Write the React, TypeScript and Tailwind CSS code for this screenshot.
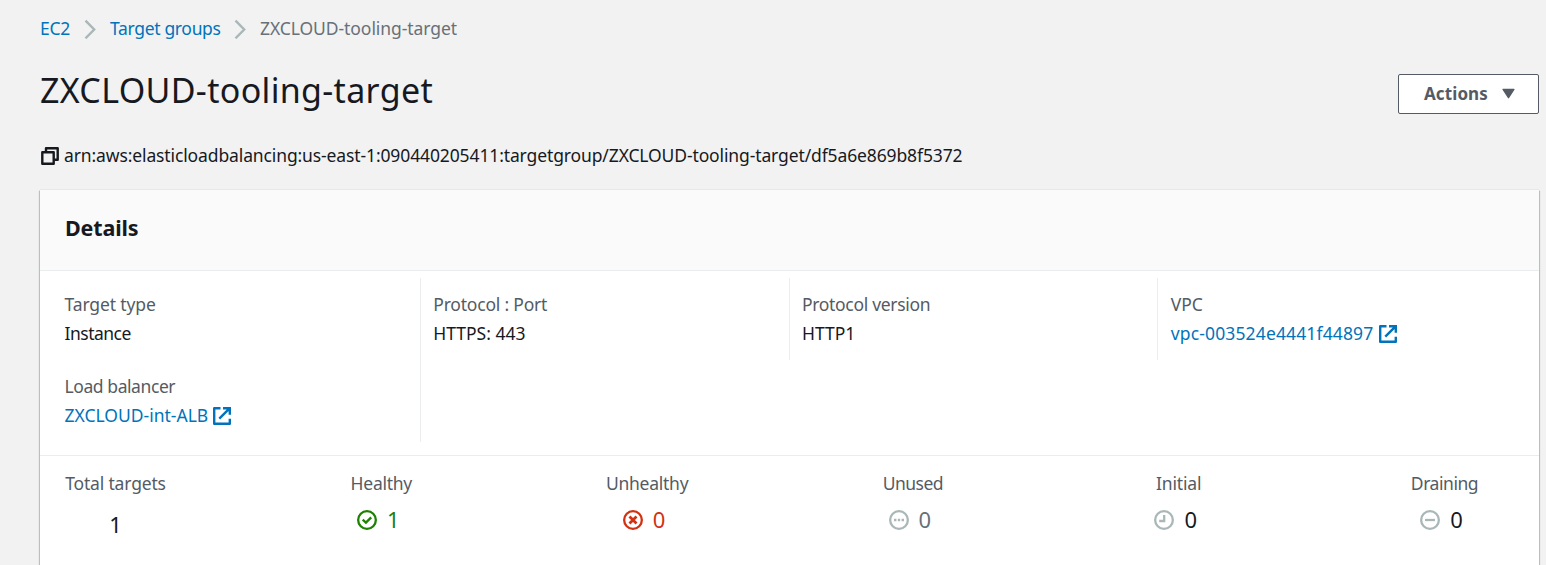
import type { ReactNode } from "react";

function Chevron() {
  return (
    <svg className="-ml-px mr-px h-5 w-3 shrink-0" viewBox="0 0 12 20" fill="none" stroke="#aab7b8" strokeWidth="2.4">
      <path d="M1.5 1.7 10.2 10.5 1.5 19.3" />
    </svg>
  );
}

function ExternalIcon() {
  return (
    <svg className="h-[18px] w-[18px] shrink-0" viewBox="0 0 18 18" fill="none" stroke="#0073bb" strokeWidth="2.4">
      <path d="M7.5 1.2H1.2v15.6h15.6v-5" strokeLinejoin="round" />
      <path d="M10 1.2h6.8v6.6M16.3 1.7 6.3 11.7" />
    </svg>
  );
}

function CopyIcon() {
  return (
    <svg className="h-[18px] w-[18px] shrink-0" viewBox="0 0 18 18" fill="none" stroke="#16191f" strokeWidth="2.4" strokeLinejoin="round">
      <path d="M1.3 5.3h11.4v11.4H1.3z" />
      <path d="M5 4.8V1.3h11.7v11.4h-3.5" />
    </svg>
  );
}

function StatusIcon({ color, children }: { color: string; children: ReactNode }) {
  return (
    <svg className="h-5 w-5 shrink-0" viewBox="0 0 20 20" fill="none" stroke={color} strokeWidth="2.3">
      <circle cx="10" cy="10" r="8.85" />
      {children}
    </svg>
  );
}

function Field({ label, labelClass, className = "", children }: { label: string; labelClass: string; className?: string; children: ReactNode }) {
  return (
    <div className={`flex h-[82px] flex-col pt-3 pl-[12.5px] ${className}`}>
      <div className={`h-[29px] leading-[29px] text-[#545b64] ${labelClass}`}>{label}</div>
      <div className="flex h-[29px] items-center">{children}</div>
    </div>
  );
}

function Stat({ label, labelClass, valueClass, icon, value }: { label: string; labelClass: string; valueClass: string; icon: ReactNode; value: string }) {
  return (
    <div className="flex w-[101px] flex-col items-center">
      <div className={`h-7 leading-7 whitespace-nowrap text-[#545b64] ${labelClass}`}>{label}</div>
      <div className={`mt-2 mr-[6px] flex h-[30px] items-center gap-[10px] text-[22px] ${valueClass}`}>
        {icon}
        <span className="-mt-0.5 leading-[30px]">{value}</span>
      </div>
    </div>
  );
}

export default function App() {
  return (
    <div className="h-[565px] w-full overflow-hidden bg-[#f2f2f2] pl-10 font-['Noto_Sans',sans-serif] text-[17.5px] text-[#16191f]">
      <nav className="flex h-[58px] items-center whitespace-nowrap text-[#0073bb]">
        <a className="w-[45px] pb-0.5 tracking-[-0.3px]">EC2</a>
        <Chevron />
        <a className="ml-[13px] w-[125px] pb-0.5 tracking-[-0.33px]">Target groups</a>
        <Chevron />
        <span className="ml-[13px] pb-0.5 tracking-[-0.07px] text-[#687078]">ZXCLOUD-tooling-target</span>
      </nav>

      <div className="flex h-[72px] items-start justify-between pr-[7px]">
        <h1 className="mt-2 text-[34px] leading-[48px] tracking-[0.33px]">ZXCLOUD-tooling-target</h1>
        <button className="mt-4 flex h-10 w-[141px] items-center rounded-[2px] border border-[#545b64] bg-white pb-0.5 pl-[25px] text-[17px] font-bold text-[#545b64]">
          <span className="w-[78px] text-left leading-none tracking-[0.1px]">Actions</span>
          <svg className="mt-px h-[11px] w-[13px]" viewBox="0 0 14 11" fill="#545b64" stroke="#545b64" strokeWidth="1.5" strokeLinejoin="round">
            <path d="M1.2 1h11.6L7 10z" />
          </svg>
        </button>
      </div>

      <div className="flex h-[52px] items-center gap-[5px] pl-px">
        <CopyIcon />
        <span className="pb-0.5 tracking-[-0.12px]">arn:aws:elasticloadbalancing:us-east-1:090440205411:targetgroup/ZXCLOUD-tooling-target/df5a6e869b8f5372</span>
      </div>

      <main className="mt-2 mr-[7px] h-[400px] bg-white shadow-[0_0_1px_0_rgba(0,28,36,0.25),1px_1px_1px_0_rgba(0,28,36,0.2),-1px_1px_1px_0_rgba(0,28,36,0.2)]">
        <header className="flex h-[81px] items-center border-b border-[#eaeded] bg-[#fafafa] pb-1 pl-[25px]">
          <h2 className="text-[21.5px] leading-7 font-bold tracking-[-0.15px]">Details</h2>
        </header>

        <section className="grid h-[185px] grid-cols-4 content-start border-b border-[#eaeded] px-3 pt-[7px]">
          <Field label="Target type" labelClass="tracking-[-0.12px]" className="border-r border-[#eaeded]">
            <span className="tracking-[-0.5px]">Instance</span>
          </Field>
          <Field label="Protocol : Port" labelClass="tracking-[-0.2px]" className="border-r border-[#eaeded]">HTTPS: 443</Field>
          <Field label="Protocol version" labelClass="tracking-[-0.32px]" className="border-r border-[#eaeded]">HTTP1</Field>
          <Field label="VPC" labelClass="tracking-[-0.1px]">
            <a className="mr-[6px] tracking-[0.14px] text-[#0073bb]">vpc-003524e4441f44897</a>
            <ExternalIcon />
          </Field>
          <Field label="Load balancer" labelClass="tracking-[-0.42px]" className="border-r border-[#eaeded]">
            <a className="mr-[5px] text-[#0073bb]">ZXCLOUD-int-ALB</a>
            <ExternalIcon />
          </Field>
        </section>

        <section className="flex justify-between pt-[13px] pr-[44px] pl-[25px]">
          <div className="flex w-[101px] flex-col items-center">
            <div className="h-7 leading-7 tracking-[-0.17px] whitespace-nowrap text-[#545b64]">Total targets</div>
            <div className="mt-3 text-[22px] leading-[30px]">1</div>
          </div>
          <Stat label="Healthy" labelClass="tracking-[-0.25px]" valueClass="text-[#1d8102]" value="1" icon={
            <StatusIcon color="#1d8102"><path d="M5.7 9.6 8.9 12.6 14.2 7.4" /></StatusIcon>
          } />
          <Stat label="Unhealthy" labelClass="tracking-[-0.25px]" valueClass="text-[#d13212]" value="0" icon={
            <StatusIcon color="#d13212"><path d="m6.5 6.5 7 7m0-7-7 7" strokeWidth="2.8" /></StatusIcon>
          } />
          <Stat label="Unused" labelClass="tracking-[-0.5px]" valueClass="text-[#687078]" value="0" icon={
            <StatusIcon color="#aab7b8"><path d="M5 10h2.4M8.8 10h2.4M12.6 10h2.4" /></StatusIcon>
          } />
          <Stat label="Initial" labelClass="tracking-[-0.15px]" valueClass="text-[#16191f]" value="0" icon={
            <StatusIcon color="#aab7b8"><path d="M10.2 5v6H5.2" /></StatusIcon>
          } />
          <Stat label="Draining" labelClass="tracking-[-0.45px]" valueClass="text-[#16191f]" value="0" icon={
            <StatusIcon color="#aab7b8"><path d="M5 10h10" /></StatusIcon>
          } />
        </section>
      </main>
    </div>
  );
}
